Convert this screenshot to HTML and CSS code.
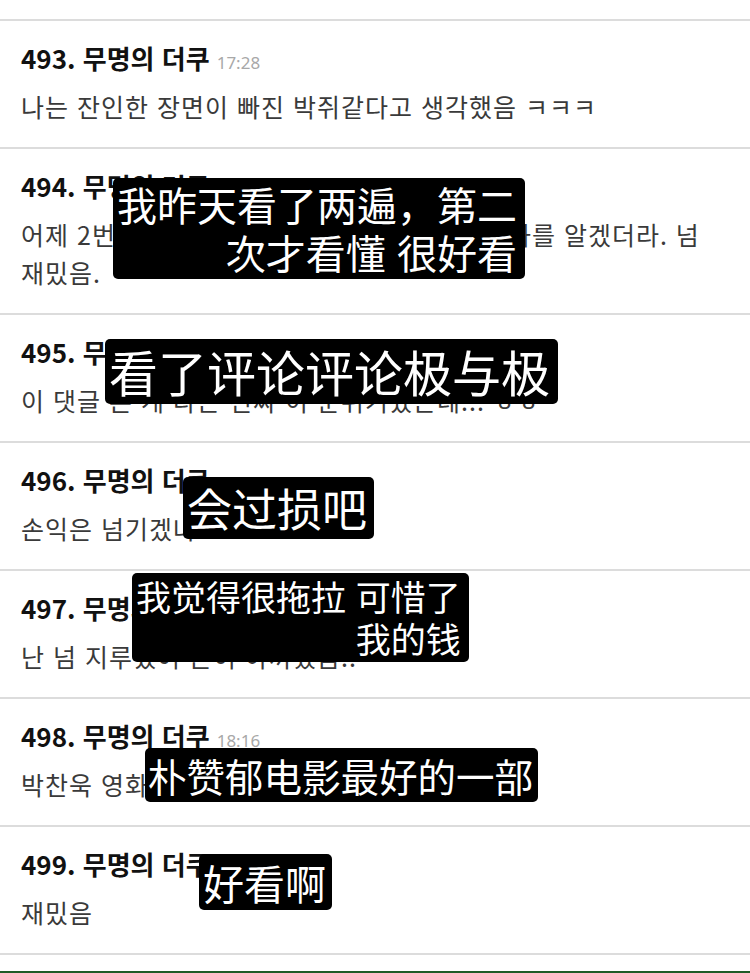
FILE: index.html
```html
<!DOCTYPE html>
<html lang="ko">
<head>
<meta charset="utf-8">
<title>댓글</title>
<link rel="stylesheet" href="styles.css">
</head>
<body>
<div class="page">
  <div class="top-gap"></div>
  <ul class="comments">
    <li class="comment">
      <div class="head"><span class="num">493.</span> <span class="name">무명의 더쿠</span><span class="time">17:28</span></div>
      <p class="body">나는 잔인한 장면이 빠진 박쥐같다고 생각했음 ㅋㅋㅋ</p>
    </li>
    <li class="comment">
      <div class="head"><span class="num">494.</span> <span class="name">무명의 더쿠</span><span class="time">17:35</span></div>
      <p class="body">어제 2번째 보고 왔는데 두 번째 보니까 이 영화를 알겠더라. 넘<br>재밌음.</p>
      <div class="cap cap1">我昨天看了两遍，第二<br>次才看懂 很好看</div>
    </li>
    <li class="comment">
      <div class="head"><span class="num">495.</span> <span class="name">무명의 더쿠</span><span class="time">17:41</span></div>
      <p class="body">이 댓글 본 게 다는 진짜 이 분위기였는데... ㅎㅎ</p>
      <div class="cap cap2">看了评论评论极与极</div>
    </li>
    <li class="comment">
      <div class="head"><span class="num">496.</span> <span class="name">무명의 더쿠</span><span class="time">17:52</span></div>
      <p class="body">손익은 넘기겠냐</p>
      <div class="cap cap3">会过损吧</div>
    </li>
    <li class="comment">
      <div class="head"><span class="num">497.</span> <span class="name">무명의 더쿠</span><span class="time">18:03</span></div>
      <p class="body">난 넘 지루했어 돈이 아까웠음..</p>
      <div class="cap cap4">我觉得很拖拉 可惜了<br>我的钱</div>
    </li>
    <li class="comment">
      <div class="head"><span class="num">498.</span> <span class="name">무명의 더쿠</span><span class="time">18:16</span></div>
      <p class="body">박찬욱 영화 중에 제일 좋았음</p>
      <div class="cap cap5">朴赞郁电影最好的一部</div>
    </li>
    <li class="comment">
      <div class="head"><span class="num">499.</span> <span class="name">무명의 더쿠</span><span class="time">18:20</span></div>
      <p class="body">재밌음</p>
      <div class="cap cap6">好看啊</div>
    </li>
  </ul>
  <div class="bottom-bar"></div>
</div>
</body>
</html>
```

FILE: styles.css
```css
html, body {
  margin: 0;
  padding: 0;
  background: #ffffff;
}

.page {
  width: 750px;
  font-family: "Noto Sans CJK KR", "Noto Sans", sans-serif;
}

.top-gap {
  height: 19px;
}

.comments {
  list-style: none;
  margin: 0;
  padding: 0;
  border-bottom: 2px solid #dcdcdc;
}

.comment {
  position: relative;
  border-top: 2px solid #dcdcdc;
  padding: 18px 21px 22px;
}

.head {
  height: 37px;
  line-height: 37px;
  font-size: 26px;
  font-weight: 700;
  color: #111111;
  white-space: nowrap;
}

.time {
  margin-left: 7px;
  font-family: "Noto Sans", "Open Sans", sans-serif;
  font-size: 17px;
  font-weight: 400;
  color: #a8a8a8;
}

.body {
  margin: 11px 0 0;
  font-size: 25px;
  letter-spacing: 1px;
  line-height: 38px;
  color: #3a3a3a;
  white-space: nowrap;
}

.cap {
  position: absolute;
  background: #000000;
  color: #ffffff;
  border-radius: 5px;
  font-family: "Noto Sans CJK SC", "Noto Sans CJK KR", sans-serif;
  font-weight: 400;
  text-align: right;
  white-space: nowrap;
}

.cap1 {
  left: 113px;
  top: 29px;
  font-size: 40px;
  line-height: 48px;
  padding: 2px 8px 3px 4px;
}

.cap2 {
  left: 105px;
  top: 24px;
  font-size: 49px;
  line-height: 62px;
  padding: 1px 8px 2px 4px;
}

.cap3 {
  left: 183px;
  top: 34px;
  font-size: 45px;
  line-height: 60px;
  padding: 1px 7px 1px 4px;
}

.cap4 {
  left: 132px;
  top: 2px;
  font-size: 35px;
  line-height: 42px;
  padding: 2px 8px 3px 4px;
}

.cap5 {
  left: 145px;
  top: 49px;
  font-size: 38.5px;
  line-height: 52px;
  padding: 1px 5px 1px 3px;
}

.cap6 {
  left: 199px;
  top: 27px;
  font-size: 41px;
  line-height: 54px;
  padding: 1px 6px 1px 4px;
}

.bottom-bar {
  margin-top: 16px;
  height: 2px;
  background: #1f5c28;
}
```
